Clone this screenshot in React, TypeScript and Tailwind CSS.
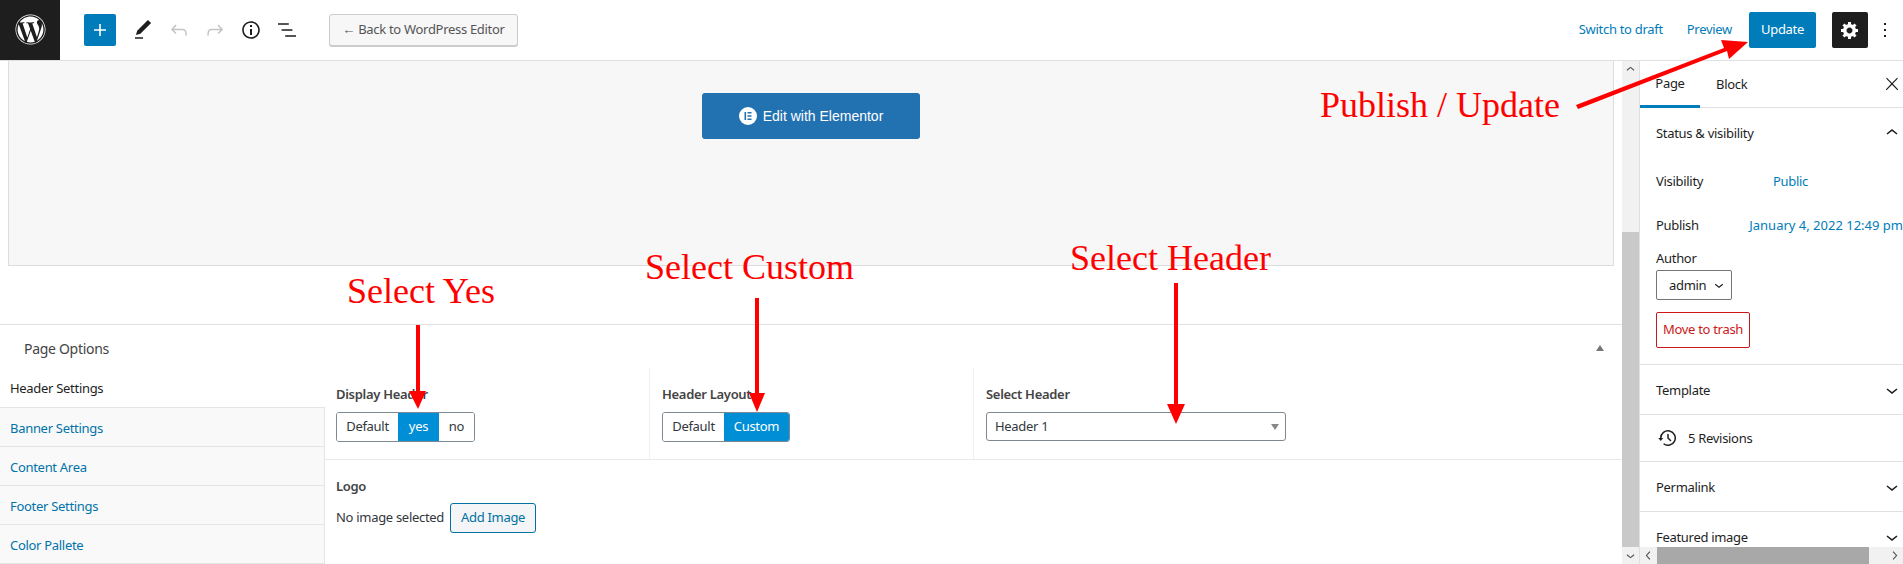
import { FaWordpress } from "react-icons/fa";

const Icon = ({ d, size = 24, box = 24, className = "" }: { d: string; size?: number; box?: number; className?: string }) => (
  <svg width={size} height={size} viewBox={`0 0 ${box} ${box}`} fill="currentColor" className={className}>
    <path d={d} />
  </svg>
);

const chevronDown = "M17.5 11.6L12 16l-5.5-4.4.9-1.2L12 14l4.5-3.6 1 1.2z";
const chevronUp = "M6.5 12.4L12 8l5.5 4.4-.9 1.2L12 10l-4.5 3.6-1-1.2z";

const Toggle = ({ items, active }: { items: { label: string; width: string }[]; active: string }) => (
  <div className="flex h-[30px] w-fit overflow-hidden rounded-[3px] border border-[#7e8993]">
    {items.map((item) => (
      <div
        key={item.label}
        className={`flex items-center justify-center ${item.width} ${item.label === active ? "bg-[#008ed6] text-white" : "bg-white text-[#32373c]"}`}
      >
        {item.label}
      </div>
    ))}
  </div>
);

const SidePanel = ({ title, height }: { title: string; height: string }) => (
  <div className={`flex shrink-0 items-center justify-between border-b border-[#e0e0e0] pl-4 ${height}`}>
    <span className="pt-[2px] text-[#1e1e1e]">{title}</span>
    <Icon d={chevronDown} className="mr-[-1px] text-[#1e1e1e]" />
  </div>
);

const Label = ({ text, className }: { text: string; className: string }) => (
  <div className={`absolute whitespace-nowrap font-['Liberation_Serif',serif] text-[36px] leading-none tracking-normal text-[#ff0000] ${className}`}>{text}</div>
);

export default function App() {
  const tabs = ["Banner Settings", "Content Area", "Footer Settings", "Color Pallete"];
  return (
    <div className="relative flex h-[564px] w-[1903px] flex-col overflow-hidden bg-white font-['Noto_Sans',sans-serif] text-[13px] tracking-[-0.3px] text-[#32373c]">
      {/* top bar */}
      <header className="flex h-[61px] shrink-0 items-center border-b border-[#e0e0e0] pb-px">
        <div className="flex h-[60px] w-[60px] items-center justify-center bg-[#1e1e1e] text-white">
          <FaWordpress size={31} />
        </div>
        <div className="ml-6 flex h-8 w-8 items-center justify-center rounded-[2px] bg-[#007cba] text-white">
          <Icon d="M18 11.2h-5.2V6h-1.6v5.2H6v1.6h5.2V18h1.6v-5.2H18z" />
        </div>
        <Icon d="M20.1 5.1L16.9 2 6.2 12.7l-1.3 4.4 4.5-1.3L20.1 5.1zM4 20.8h8v-1.5H4v1.5z" className="ml-[15px] text-[#1e1e1e]" />
        <Icon d="M18.3 11.7c-.6-.6-1.4-.9-2.3-.9H6.7l2.9-3.3-1.1-1-4.5 5L8.5 16l1-1-2.7-2.7H16c.5 0 .9.2 1.3.5 1 1 1 3.4 1 4.5v.3h1.5v-.2c0-1.5 0-4.3-1.5-5.7z" className="ml-[12px] text-[#c4c4c4]" />
        <Icon d="M15.6 6.5l-1.1 1 2.9 3.3H8c-.9 0-1.7.3-2.3.9-1.4 1.5-1.4 4.2-1.4 5.6v.2h1.5v-.3c0-1.1 0-3.5 1-4.500.3-.3.7-.5 1.3-.5h9.2L14.5 15l1.1 1.1 4.6-4.6-4.6-5z" className="ml-[12px] text-[#c4c4c4]" />
        <Icon d="M12 3.2c-4.8 0-8.8 3.9-8.8 8.8 0 4.8 3.9 8.8 8.8 8.8 4.8 0 8.8-3.9 8.8-8.8 0-4.8-4-8.8-8.8-8.8zm0 16c-4 0-7.2-3.3-7.2-7.2C4.8 8 8 4.8 12 4.8s7.2 3.3 7.2 7.2c0 4-3.2 7.2-7.2 7.2zM11 17h2v-6h-2v6zm0-8h2V7h-2v2z" className="ml-[12px] text-[#1e1e1e]" />
        <Icon d="M13.8 5.2H3v1.5h10.8V5.2zm-3.6 12v1.5H21v-1.5H10.2zm7.2-6H6.6v1.5h10.8v-1.5z" className="ml-[12px] text-[#1e1e1e]" />
        <div className="ml-[30px] flex h-8 w-[189px] items-center justify-center rounded-[3px] border border-[#ccc] bg-[#f7f7f7] text-[#555] shadow-[0_1px_0_#ccc]">
          ← Back to WordPress Editor
        </div>
        <div className="ml-auto flex items-center">
          <span className="text-[#007cba]">Switch to draft</span>
          <span className="ml-6 text-[#007cba]">Preview</span>
          <div className="ml-[17px] flex h-9 w-[67px] items-center justify-center rounded-[2px] bg-[#007cba] text-white">Update</div>
          <div className="ml-4 flex h-9 w-9 items-center justify-center rounded-[2px] bg-[#1e1e1e] text-white">
            <Icon d="M18 12h-2.18c-.17.7-.44 1.35-.81 1.93l1.54 1.54-2.1 2.1-1.54-1.54c-.58.36-1.23.63-1.91.79V19H8v-2.18c-.68-.16-1.33-.43-1.91-.79l-1.54 1.54-2.12-2.12 1.54-1.54c-.36-.58-.63-1.23-.79-1.91H1V9.03h2.17c.16-.7.44-1.35.8-1.94L2.43 5.55l2.1-2.1 1.54 1.54c.58-.37 1.24-.64 1.93-.81V2h3v2.18c.68.16 1.33.43 1.91.79l1.54-1.54 2.12 2.12-1.54 1.54c.36.59.64 1.24.8 1.94H18V12zm-8.5 1.5c1.66 0 3-1.34 3-3s-1.34-3-3-3-3 1.34-3 3 1.34 3 3 3z" box={20} size={20} />
          </div>
          <Icon d="M13 19h-2v-2h2v2zm0-6h-2v-2h2v2zm0-6h-2V5h2v2z" className="ml-[5px] mr-[6px] text-[#1e1e1e]" />
        </div>
      </header>

      <div className="flex min-h-0 flex-1">
        {/* page content */}
        <main className="flex w-[1622px] shrink-0 flex-col">
          <div className="mx-2 flex h-[205px] shrink-0 justify-center border-x border-b border-[#ddd] bg-[#f7f7f7] pt-8">
            <div className="flex h-[46px] w-[218px] items-center justify-center gap-[6px] rounded-[3px] bg-[#2271b1] font-['Liberation_Sans',sans-serif] text-[14px] tracking-normal text-white">
              <svg width="18" height="18" viewBox="0 0 18 18">
                <circle cx="9" cy="9" r="9" fill="#fff" />
                <path d="M5.5 5h1.6v8H5.500zM8.500 5h4v1.500h-4zM8.500 8.200h4v1.500h-4zM8.500 11.500h4V13h-4z" fill="#2271b1" />
              </svg>
              Edit with Elementor
            </div>
          </div>

          <section className="mt-[58px] flex flex-1 flex-col border-t border-[#e0e0e0]">
            <div className="flex h-[43px] shrink-0 items-center justify-between pl-6 pr-[18px]">
              <span className="pt-[4px] text-[14px] text-[#444]">Page Options</span>
              <div className="mt-[2px] h-0 w-0 border-x-[4px] border-b-[6px] border-x-transparent border-b-[#72777c]" />
            </div>
            <div className="flex flex-1">
              <div className="w-[325px] shrink-0">
                <div className="flex h-[40px] items-center border-b border-[#e5e5e5] pl-[10px] pt-[3px] text-[#1e1e1e]">Header Settings</div>
                {tabs.map((tab) => (
                  <div key={tab} className="flex h-[39px] items-center border-b border-r border-[#e5e5e5] bg-[#f9f9f9] pl-[10px] pt-[3px] text-[#0073aa]">
                    {tab}
                  </div>
                ))}
              </div>
              <div className="flex-1">
                <div className="flex h-[92px] border-b border-[#e9e9e9]">
                  <div className="w-[325px] border-r border-[#f0f0f0] pl-[11px] pt-4">
                    <div className="mb-2 font-semibold leading-5 text-[#444]">Display Header</div>
                    <Toggle
                      active="yes"
                      items={[
                        { label: "Default", width: "w-[61px]" },
                        { label: "yes", width: "w-[41px]" },
                        { label: "no", width: "w-[35px]" },
                      ]}
                    />
                  </div>
                  <div className="w-[324px] border-r border-[#f0f0f0] pl-3 pt-4">
                    <div className="mb-2 font-semibold leading-5 text-[#444]">Header Layout</div>
                    <Toggle
                      active="Custom"
                      items={[
                        { label: "Default", width: "w-[61px]" },
                        { label: "Custom", width: "w-[65px]" },
                      ]}
                    />
                  </div>
                  <div className="pl-3 pt-4">
                    <div className="mb-2 font-semibold leading-5 text-[#444]">Select Header</div>
                    <div className="flex h-[29px] w-[300px] items-center justify-between rounded-[3px] border border-[#7e8993] pl-2 pr-[6px] text-[#32373c]">
                      Header 1
                      <div className="h-0 w-0 border-x-[4px] border-t-[6px] border-x-transparent border-t-[#888]" />
                    </div>
                  </div>
                </div>
                <div className="pl-[11px] pt-4">
                  <div className="font-semibold leading-5 text-[#444]">Logo</div>
                  <div className="mt-[7px] flex items-center gap-[6px]">
                    <span>No image selected</span>
                    <div className="flex h-[30px] w-[86px] items-center justify-center rounded-[3px] border border-[#0071a1] bg-[#f3f5f6] text-[#0071a1]">Add Image</div>
                  </div>
                </div>
              </div>
            </div>
          </section>
        </main>

        {/* content scrollbar */}
        <div className="flex w-[17px] shrink-0 flex-col bg-[#f1f1f1] text-[#505050]">
          <Icon d={chevronUp} size={17} />
          <div className="mt-[154px] h-[315px] bg-[#c9c9c9]" />
          <Icon d={chevronDown} size={17} />
        </div>

        {/* settings sidebar */}
        <aside className="relative flex w-[264px] shrink-0 flex-col overflow-hidden border-l border-[#e0e0e0] text-[#1e1e1e]">
          <div className="flex h-[47px] shrink-0 items-stretch border-b border-[#e0e0e0]">
            <div className="mb-[-1px] flex w-[60px] items-center justify-center border-b-[3px] border-[#007cba] pt-[2px]">Page</div>
            <div className="ml-4 flex items-center pt-[2px]">Block</div>
            <Icon d="M13 11.8l6.1-6.3-1-1-6.1 6.2-6.1-6.2-1 1 6.1 6.3-6.5 6.7 1 1 6.5-6.600 6.500 6.600 1-1z" size={20} className="ml-auto mr-[1px] self-center" />
          </div>
          <div className="h-[257px] shrink-0 border-b border-[#e0e0e0] pl-4">
            <div className="flex h-[50px] items-center justify-between">
              <span className="pt-[2px]">Status &amp; visibility</span>
              <Icon d={chevronUp} className="mr-[-1px]" />
            </div>
            <div className="mt-[14px] flex h-5 items-center">
              <span className="w-[117px]">Visibility</span>
              <span className="text-[#007cba]">Public</span>
            </div>
            <div className="mt-6 flex h-5 items-center whitespace-nowrap">
              <span className="w-[95px]">Publish</span>
              <span className="tracking-normal text-[#007cba]">January 4, 2022 12:49 pm</span>
            </div>
            <div className="mt-[12px] h-5 leading-5">Author</div>
            <div className="mt-[2px] flex h-[30px] w-[76px] items-center justify-between rounded-[2px] border border-[#757575] pl-3 pr-[3px]">
              <span className="pt-[2px]">admin</span>
              <Icon d={chevronDown} size={18} />
            </div>
            <div className="mt-3 flex h-[36px] w-[94px] items-center justify-center rounded-[2px] border border-[#cc1818] text-[#cc1818]">Move to trash</div>
          </div>
          <SidePanel title="Template" height="h-[50px]" />
          <div className="flex h-[47px] shrink-0 items-center gap-2 border-b border-[#e0e0e0] pl-4">
            <Icon d="M5.500 12h1.750l-2.500 3-2.500-3H4a8 8 0 113.134 6.350l.907-1.194A6.500 6.500 0 105.500 12zm9.530 1.970l-2.280-2.280V8.500a.750.750 0 00-1.500 0V12a.747.747 0 00.218.529l2.500 2.500a.750.750 0 101.060-1.061z" />
            <span className="pt-[2px]">5 Revisions</span>
          </div>
          <SidePanel title="Permalink" height="h-[50px]" />
          <div className="flex h-[37px] shrink-0 items-end justify-between pl-4">
            <span className="leading-6">Featured image</span>
            <Icon d={chevronDown} className="mr-[-1px]" />
          </div>
          <div className="absolute bottom-0 left-0 right-0 flex h-[17px] items-center bg-[#f1f1f1] text-[#505050]">
            <Icon d="M14.600 7l-1.200-1L8 12l5.400 6 1.200-1-4.600-5z" size={17} />
            <div className="h-full w-[212px] bg-[#a8a8a8]" />
            <Icon d="M10.600 6L9.400 7l4.600 5-4.600 5 1.200 1 5.400-6z" size={17} className="ml-auto" />
          </div>
        </aside>
      </div>

      {/* red annotations */}
      <Label text="Publish / Update" className="left-[1320px] top-[87px]" />
      <Label text="Select Yes" className="left-[347px] top-[273px]" />
      <Label text="Select Custom" className="left-[645px] top-[249px]" />
      <Label text="Select Header" className="left-[1070px] top-[240px]" />
      <svg width="1903" height="564" viewBox="0 0 1903 564" fill="#ff0000" className="pointer-events-none absolute left-0 top-0">
        <path d="M1576 105 L1724 48 L1721 40 L1748 42 L1729 59 L1727 51 L1578 109 Z" />
        <path d="M416 325 H420 V391 H426 L418 409 L409 391 H416 Z" />
        <path d="M755 298 H759 V393 H765 L757 412 L749 393 H755 Z" />
        <path d="M1174 283 H1178 V404 H1185 L1176 424 L1167 404 H1174 Z" />
      </svg>
    </div>
  );
}
